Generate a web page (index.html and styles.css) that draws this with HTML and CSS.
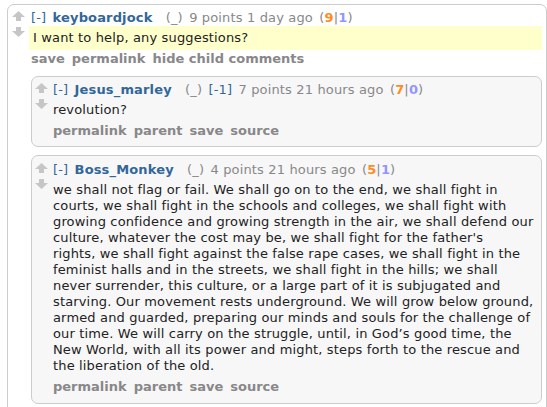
FILE: index.html
```html
<!DOCTYPE html>
<html lang="en">
  <head>
    <meta charset="UTF-8" />
    <meta name="viewport" content="width=device-width, initial-scale=1.0" />
    <title>Comments</title>
    <link rel="stylesheet" href="styles.css">
  </head>
  <body>
    <div class="comment top">
      <div class="midcol">
        <svg class="arrow" viewBox="0 0 13 10"><polygon points="6.5,0 13,6 9,6 9,10 4,10 4,6 0,6" /></svg>
        <svg class="arrow" viewBox="0 0 13 10"><polygon points="4,0 9,0 9,4 13,4 6.5,10 0,4 4,4" /></svg>
      </div>
      <div class="entry">
        <p class="tagline">
          <a class="expand">[-]</a>
          <a class="author">keyboardjock</a>
          <span class="flair">(_)</span>
          <span>9 points 1 day ago</span>
          <span>(<b class="up">9</b>|<b class="down">1</b>)</span>
        </p>
        <div class="md highlight">I want to help, any suggestions?</div>
        <ul class="buttons">
          <li>save</li>
          <li>permalink</li>
          <li>hide child comments</li>
        </ul>

        <div class="child">
          <div class="comment nested">
            <div class="midcol">
              <svg class="arrow" viewBox="0 0 13 10"><polygon points="6.5,0 13,6 9,6 9,10 4,10 4,6 0,6" /></svg>
              <svg class="arrow" viewBox="0 0 13 10"><polygon points="4,0 9,0 9,4 13,4 6.5,10 0,4 4,4" /></svg>
            </div>
            <div class="entry">
              <p class="tagline">
                <a class="expand">[-]</a>
                <a class="author">Jesus_marley</a>
                <span class="flair">(_)</span>
                <span class="expand">[-1]</span>
                <span>7 points 21 hours ago</span>
                <span>(<b class="up">7</b>|<b class="down">0</b>)</span>
              </p>
              <div class="md">revolution?</div>
              <ul class="buttons">
                <li>permalink</li>
                <li>parent</li>
                <li>save</li>
                <li>source</li>
              </ul>
            </div>
          </div>

          <div class="comment nested">
            <div class="midcol">
              <svg class="arrow" viewBox="0 0 13 10"><polygon points="6.5,0 13,6 9,6 9,10 4,10 4,6 0,6" /></svg>
              <svg class="arrow" viewBox="0 0 13 10"><polygon points="4,0 9,0 9,4 13,4 6.5,10 0,4 4,4" /></svg>
            </div>
            <div class="entry">
              <p class="tagline">
                <a class="expand">[-]</a>
                <a class="author">Boss_Monkey</a>
                <span class="flair">(_)</span>
                <span>4 points 21 hours ago</span>
                <span>(<b class="up">5</b>|<b class="down">1</b>)</span>
              </p>
              <div class="md">we shall not flag or fail. We shall go on to the end, we shall fight in<br>
                courts, we shall fight in the schools and colleges, we shall fight with<br>
                growing confidence and growing strength in the air, we shall defend our<br>
                culture, whatever the cost may be, we shall fight for the father's<br>
                rights, we shall fight against the false rape cases, we shall fight in the<br>
                feminist halls and in the streets, we shall fight in the hills; we shall<br>
                never surrender, this culture, or a large part of it is subjugated and<br>
                starving. Our movement rests underground. We will grow below ground,<br>
                armed and guarded, preparing our minds and souls for the challenge of<br>
                our time. We will carry on the struggle, until, in God’s good time, the<br>
                New World, with all its power and might, steps forth to the rescue and<br>
                the liberation of the old.</div>
              <ul class="buttons">
                <li>permalink</li>
                <li>parent</li>
                <li>save</li>
                <li>source</li>
              </ul>
            </div>
          </div>
        </div>
      </div>
    </div>
  </body>
</html>
```

FILE: styles.css
```css
* {
  margin: 0;
  padding: 0;
  box-sizing: border-box;
}

body {
  font-family: "DejaVu Sans", Verdana, sans-serif;
  font-size: 13px;
  line-height: 16px;
  letter-spacing: 0.15px;
  color: #222;
  background: #fff;
  padding: 4px 0 0 7px;
  overflow: hidden;
}

.comment {
  display: flex;
  border: 1px solid #ccc;
  border-radius: 7px;
  padding: 5px 4px 7px 4px;
}

.comment.top {
  width: 540px;
  min-height: 420px;
  background: #fff;
}

.comment.nested {
  background: #f7f7f8;
  padding-left: 3px;
  padding-right: 1px;
  margin-bottom: 8px;
}

.nested:last-child {
  padding-top: 6px;
  padding-bottom: 8px;
}

.midcol {
  width: 13px;
  flex-shrink: 0;
  display: flex;
  flex-direction: column;
  gap: 6px;
  padding-top: 1px;
  margin-right: 6px;
}

.nested .midcol {
  margin-right: 5px;
}

.arrow {
  width: 13px;
  height: 10px;
  fill: #c6c6c6;
}

.entry {
  flex: 1;
  min-width: 0;
}

.tagline {
  color: #888;
}

.tagline a,
.tagline span {
  margin-right: 2px;
}

.expand {
  color: #369;
}

.author {
  color: #369;
  font-weight: bold;
  margin-right: 9px !important;
}

.up {
  color: #ff8b24;
}

.down {
  color: #9494ff;
}

.md {
  padding: 4px 0;
  white-space: nowrap;
}

.md.highlight {
  background: #ffc;
  margin-left: -2px;
  padding: 4px 4px;
}

.buttons {
  list-style: none;
  display: flex;
  gap: 7px;
  padding-top: 1px;
  color: #888;
  font-weight: bold;
  letter-spacing: 0;
}

.child {
  margin-top: 9px;
}
```
